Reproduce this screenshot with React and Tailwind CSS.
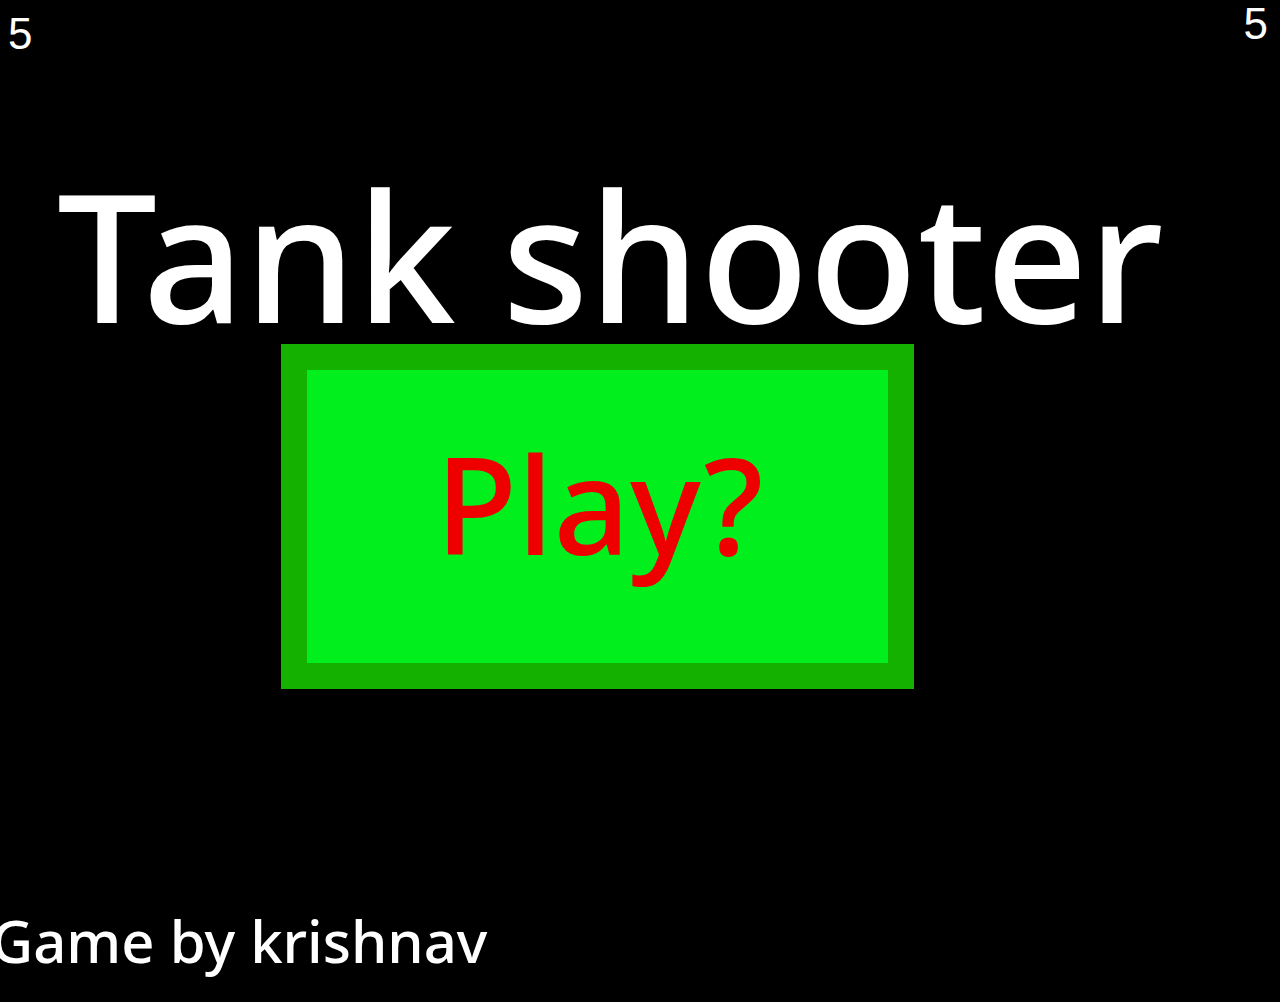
export default function App() {
  return (
    <div className="w-[1280px] h-[1002px] bg-black overflow-hidden flex flex-col items-start text-white">
      <div className="w-full flex justify-between items-start font-['Liberation_Sans',Arial,sans-serif] text-[44px] leading-none">
        <span className="mt-[12px] ml-[8px]">5</span>
        <span className="mt-[2px] mr-[12px]">5</span>
      </div>

      <h1 className="mt-[109px] ml-[57px] font-['Noto_Sans',sans-serif] font-medium text-[178px] leading-none whitespace-nowrap">
        Tank shooter
      </h1>

      <button className="mt-[1px] ml-[281px] w-[633px] h-[345px] bg-[#14b100] p-[26px] flex">
        <div className="flex-1 bg-[#00ef1d] flex justify-center pt-[66px] pl-[4px]">
          <span className="font-['Noto_Sans',sans-serif] font-medium text-[134px] leading-none text-[#ee0000]">Play?</span>
        </div>
      </button>

      <p className="mt-[223px] -ml-[9px] font-['Noto_Sans',sans-serif] font-medium text-[58px] leading-none whitespace-nowrap">
        Game by krishnav
      </p>
    </div>
  )
}
